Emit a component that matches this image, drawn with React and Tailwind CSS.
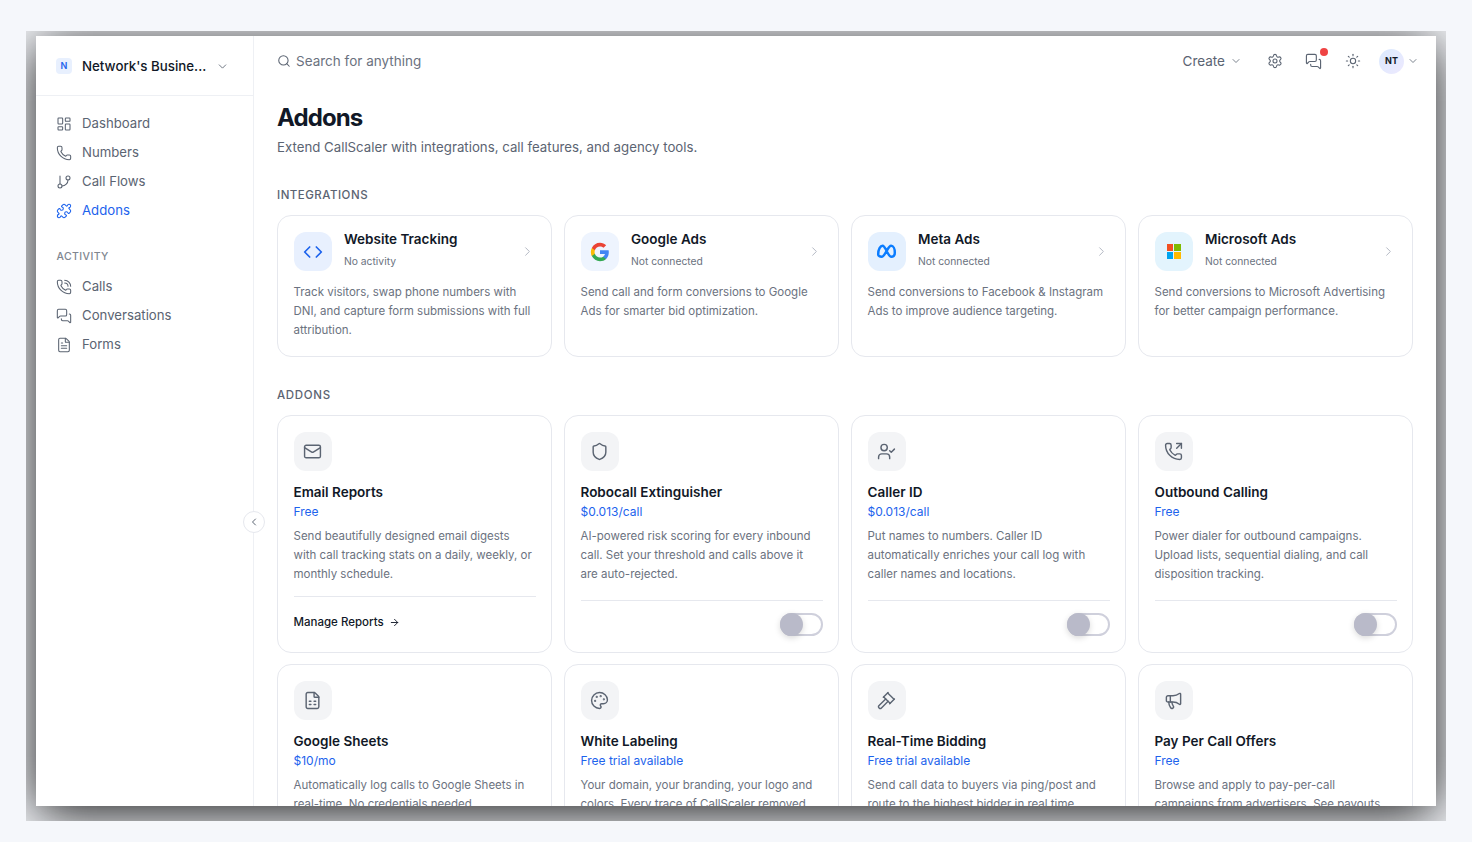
import {
  LayoutDashboard,
  Phone,
  GitBranch,
  Puzzle,
  PhoneCall,
  MessagesSquare,
  FileText,
  Search,
  ChevronDown,
  ChevronLeft,
  ChevronRight,
  Settings,
  Sun,
  Code,
  Mail,
  Shield,
  UserCheck,
  PhoneOutgoing,
  FileSpreadsheet,
  Palette,
  Gavel,
  Megaphone,
  ArrowRight,
} from "lucide-react";

const GoogleLogo = () => (
  <svg viewBox="0 0 24 24" className="w-[20px] h-[20px]">
    <path fill="#4285F4" d="M22.56 12.25c0-.78-.07-1.53-.2-2.25H12v4.26h5.92c-.26 1.37-1.04 2.53-2.21 3.31v2.77h3.57c2.08-1.92 3.28-4.74 3.28-8.09z" />
    <path fill="#34A853" d="M12 23c2.97 0 5.46-.98 7.28-2.66l-3.57-2.77c-.98.66-2.23 1.06-3.71 1.06-2.86 0-5.29-1.93-6.16-4.53H2.18v2.84C3.99 20.53 7.7 23 12 23z" />
    <path fill="#FBBC05" d="M5.84 14.09c-.22-.66-.35-1.36-.35-2.09s.13-1.43.35-2.09V7.07H2.18C1.43 8.55 1 10.22 1 12s.43 3.45 1.18 4.93l3.66-2.84z" />
    <path fill="#EA4335" d="M12 5.38c1.62 0 3.06.56 4.21 1.64l3.15-3.15C17.45 2.09 14.97 1 12 1 7.7 1 3.99 3.47 2.18 7.07l3.66 2.84c.87-2.6 3.3-4.53 6.16-4.53z" />
  </svg>
);

const MetaLogo = () => (
  <svg viewBox="0 0 24 24" className="w-[21px] h-[21px] -ml-[1px]" fill="none">
    <path
      d="M2.5 15C2.5 9.5 5 5.5 7.5 5.5C11 5.5 13.5 18 17.5 18C20 18 21.5 16 21.5 13C21.5 9 19.8 5.5 17.3 5.5C13.5 5.5 10.5 18 6.5 18C4 18 2.5 17 2.5 15Z"
      stroke="#0a7cff"
      strokeWidth="2.8"
      strokeLinejoin="round"
    />
  </svg>
);

const MicrosoftLogo = () => (
  <div className="grid grid-cols-2 gap-px w-[14px] h-[15px]">
    <div className="bg-[#f25022]" />
    <div className="bg-[#7fba00]" />
    <div className="bg-[#00a4ef]" />
    <div className="bg-[#ffb900]" />
  </div>
);

const integrations = [
  {
    title: "Website Tracking",
    status: "No activity",
    desc: "Track visitors, swap phone numbers with DNI, and capture form submissions with full attribution.",
    iconBg: "bg-[#e8f0fe]",
    icon: <Code className="w-[20px] h-[20px] text-[#1d63ed]" strokeWidth={2} />,
  },
  {
    title: "Google Ads",
    status: "Not connected",
    desc: "Send call and form conversions to Google Ads for smarter bid optimization.",
    iconBg: "bg-[#eef4fe]",
    icon: <GoogleLogo />,
  },
  {
    title: "Meta Ads",
    status: "Not connected",
    desc: "Send conversions to Facebook & Instagram Ads to improve audience targeting.",
    iconBg: "bg-[#e4f0fe]",
    icon: <MetaLogo />,
  },
  {
    title: "Microsoft Ads",
    status: "Not connected",
    desc: "Send conversions to Microsoft Advertising for better campaign performance.",
    iconBg: "bg-[#e3f4fd]",
    icon: <MicrosoftLogo />,
  },
];

const addons = [
  {
    title: "Email Reports",
    price: "Free",
    desc: "Send beautifully designed email digests with call tracking stats on a daily, weekly, or monthly schedule.",
    Icon: Mail,
    link: "Manage Reports",
  },
  {
    title: "Robocall Extinguisher",
    price: "$0.013/call",
    desc: "AI-powered risk scoring for every inbound call. Set your threshold and calls above it are auto-rejected.",
    Icon: Shield,
    toggle: true,
  },
  {
    title: "Caller ID",
    price: "$0.013/call",
    desc: "Put names to numbers. Caller ID automatically enriches your call log with caller names and locations.",
    Icon: UserCheck,
    toggle: true,
  },
  {
    title: "Outbound Calling",
    price: "Free",
    desc: "Power dialer for outbound campaigns. Upload lists, sequential dialing, and call disposition tracking.",
    Icon: PhoneOutgoing,
    toggle: true,
  },
  {
    title: "Google Sheets",
    price: "$10/mo",
    desc: "Automatically log calls to Google Sheets in real-time. No credentials needed.",
    Icon: FileSpreadsheet,
  },
  {
    title: "White Labeling",
    price: "Free trial available",
    desc: "Your domain, your branding, your logo and colors. Every trace of CallScaler removed.",
    Icon: Palette,
  },
  {
    title: "Real-Time Bidding",
    price: "Free trial available",
    desc: "Send call data to buyers via ping/post and route to the highest bidder in real time.",
    Icon: Gavel,
  },
  {
    title: "Pay Per Call Offers",
    price: "Free",
    desc: "Browse and apply to pay-per-call campaigns from advertisers. See payouts",
    Icon: Megaphone,
  },
];

const NavItem = ({ icon: Icon, label, active }) => (
  <div
    className={`flex items-center gap-[10px] h-[29px] px-[20px] text-[13.2px] ${
      active ? "text-[#1d63ed]" : "text-[#5b6472]"
    }`}
  >
    <Icon className="w-[16px] h-[16px]" strokeWidth={1.6} />
    <span>{label}</span>
  </div>
);

const IntegrationCard = ({ item }) => (
  <div className="h-[142px] bg-white border border-[#e6e8ee] rounded-[14px] px-[15.5px] pt-[16px]">
    <div className="flex items-center h-[39px]">
      <div className={`w-[38px] h-[39px] rounded-[12px] flex items-center justify-center ${item.iconBg}`}>
        {item.icon}
      </div>
      <div className="ml-[12.5px] flex-1 pb-[5px]">
        <div className="text-[13.5px] leading-[18px] font-semibold text-[#111827]">{item.title}</div>
        <div className="text-[10.3px] leading-[14px] mt-[6px] text-[#6b7280]">{item.status}</div>
      </div>
      <ChevronRight className="mr-[1px] w-[15px] h-[15px] text-[#b4b9c4]" strokeWidth={1.6} />
    </div>
    <p className="mt-[12px] text-[11.5px] leading-[19.2px] text-[#6b7280]">{item.desc}</p>
  </div>
);

const AddonCard = ({ item }) => {
  const Icon = item.Icon;

  return (
    <div className="min-h-[238px] bg-white border border-[#e6e8ee] rounded-[14px] px-[15.5px] pt-[16px] flex flex-col">
      <div className="w-[38px] h-[39px] rounded-[12px] bg-[#f3f4f6] flex items-center justify-center">
        <Icon className="w-[19px] h-[19px] text-[#5b6472]" strokeWidth={1.8} />
      </div>
      <div className="mt-[12px] text-[13.5px] leading-[18px] font-semibold text-[#111827]">{item.title}</div>
      <div className="mt-[1.5px] text-[12px] leading-[18px] text-[#1d63ed]">{item.price}</div>
      <p className="mt-[6px] text-[11.5px] leading-[19.2px] text-[#6b7280]">{item.desc}</p>

      {/* FOOTER */}
      {item.link && (
        <div className="mt-[12px] pt-[17px] border-t border-[#e6e8ee] flex items-center gap-[5px] text-[11.5px] leading-[16px] font-medium text-[#111827]">
          {item.link}
          <ArrowRight className="w-[11px] h-[11px]" strokeWidth={2} />
        </div>
      )}
      {item.toggle && (
        <div className="mt-[16px] pt-[12px] border-t border-[#e6e8ee] flex justify-end">
          <div className="w-[43px] h-[23px] rounded-full border-2 border-[#cfd0dc] bg-white relative">
            <div className="absolute -left-[2px] -top-[2px] w-[23px] h-[23px] rounded-full bg-[#b9bac9] shadow-[0_2px_6px_rgba(0,0,0,0.15)]" />
          </div>
        </div>
      )}
    </div>
  );
};

const App = () => {
  return (
    <div className="w-[1472px] h-[842px] bg-[#f5f7fb] pt-[31px] pl-[26px] overflow-hidden font-['Inter',sans-serif]">
      <div className="w-[1420px] h-[790px] overflow-hidden pt-[5px] pl-[10px]">
        <div className="w-[1400px] h-[770px] bg-white flex relative shadow-[0_8px_50px_rgba(0,0,0,0.9)]">

          {/* SIDEBAR */}
          <aside className="w-[218px] shrink-0 border-r border-[#eef0f4]">
            <div className="h-[60px] pt-[2px] border-b border-[#eef0f4] flex items-center px-[20px]">
              <div className="w-[16px] h-[16px] -mt-[2px] rounded-[4px] bg-[#e8f0fe] text-[#1d63ed] text-[9px] font-semibold flex items-center justify-center">
                N
              </div>
              <span className="ml-[10px] w-[124px] whitespace-nowrap text-[13.3px] font-medium text-[#111827]">Network's Busine...</span>
              <ChevronDown className="ml-[10px] w-[13px] h-[13px] text-[#5b6472]" strokeWidth={1.6} />
            </div>

            <nav className="pt-[13px]">
              <NavItem icon={LayoutDashboard} label="Dashboard" />
              <NavItem icon={Phone} label="Numbers" />
              <NavItem icon={GitBranch} label="Call Flows" />
              <NavItem icon={Puzzle} label="Addons" active />
            </nav>

            <div className="mt-[24px] px-[20.5px] text-[10.5px] leading-[16px] font-medium tracking-[0.4px] text-[#80868f]">
              ACTIVITY
            </div>
            <nav className="mt-[7px]">
              <NavItem icon={PhoneCall} label="Calls" />
              <NavItem icon={MessagesSquare} label="Conversations" />
              <NavItem icon={FileText} label="Forms" />
            </nav>
          </aside>

          {/* COLLAPSE */}
          <button className="absolute left-[207px] top-[475px] w-[22px] h-[22px] rounded-full bg-white border border-[#e6e8ee] flex items-center justify-center text-[#5b6472]">
            <ChevronLeft className="w-[12px] h-[12px]" strokeWidth={2} />
          </button>

          <main className="flex-1 min-w-0 overflow-hidden px-[23px]">

            {/* TOPBAR */}
            <div className="h-[50px] flex items-center">
              <Search className="w-[14px] h-[14px] text-[#5b6472]" strokeWidth={1.8} />
              <span className="ml-[5px] text-[13.5px] text-[#6b7280]">Search for anything</span>
              <div className="ml-auto -mr-[6px] flex items-center text-[#5b6472]">
                <span className="text-[13.5px]">Create</span>
                <ChevronDown className="ml-[5px] w-[12px] h-[12px]" strokeWidth={1.6} />
                <Settings className="ml-[25px] w-[16px] h-[16px]" strokeWidth={1.6} />
                <div className="ml-[22px] relative">
                  <MessagesSquare className="w-[17px] h-[17px]" strokeWidth={1.6} />
                  <div className="absolute -top-[5px] -right-[6px] w-[8px] h-[8px] rounded-full bg-[#ef4444]" />
                </div>
                <Sun className="ml-[23px] w-[16px] h-[16px]" strokeWidth={1.6} />
                <div className="ml-[18px] w-[25px] h-[25px] rounded-full bg-gradient-to-br from-[#dbeafe] to-[#ede9fe] text-[#111827] text-[9px] font-bold flex items-center justify-center">
                  NT
                </div>
                <ChevronDown className="ml-[3px] w-[12px] h-[12px]" strokeWidth={1.6} />
              </div>
            </div>

            {/* HEADER */}
            <h1 className="mt-[17px] text-[24px] leading-[30px] font-bold tracking-[-0.9px] text-[#111827]">Addons</h1>
            <p className="mt-[4px] text-[13.25px] leading-[20px] text-[#5b6472]">
              Extend CallScaler with integrations, call features, and agency tools.
            </p>

            {/* INTEGRATIONS */}
            <h2 className="mt-[30px] text-[11.5px] leading-[16px] font-medium tracking-[0.5px] text-[#5b6472]">INTEGRATIONS</h2>
            <div className="mt-[12px] grid grid-cols-4 gap-[12px]">
              {integrations.map((item) => (
                <IntegrationCard key={item.title} item={item} />
              ))}
            </div>

            {/* ADDONS */}
            <h2 className="mt-[30px] text-[11.5px] leading-[16px] font-medium tracking-[0.7px] text-[#5b6472]">ADDONS</h2>
            <div className="mt-[12px] grid grid-cols-4 gap-x-[12px] gap-y-[11px]">
              {addons.map((item) => (
                <AddonCard key={item.title} item={item} />
              ))}
            </div>
          </main>
        </div>
      </div>
    </div>
  );
};

export default App;
